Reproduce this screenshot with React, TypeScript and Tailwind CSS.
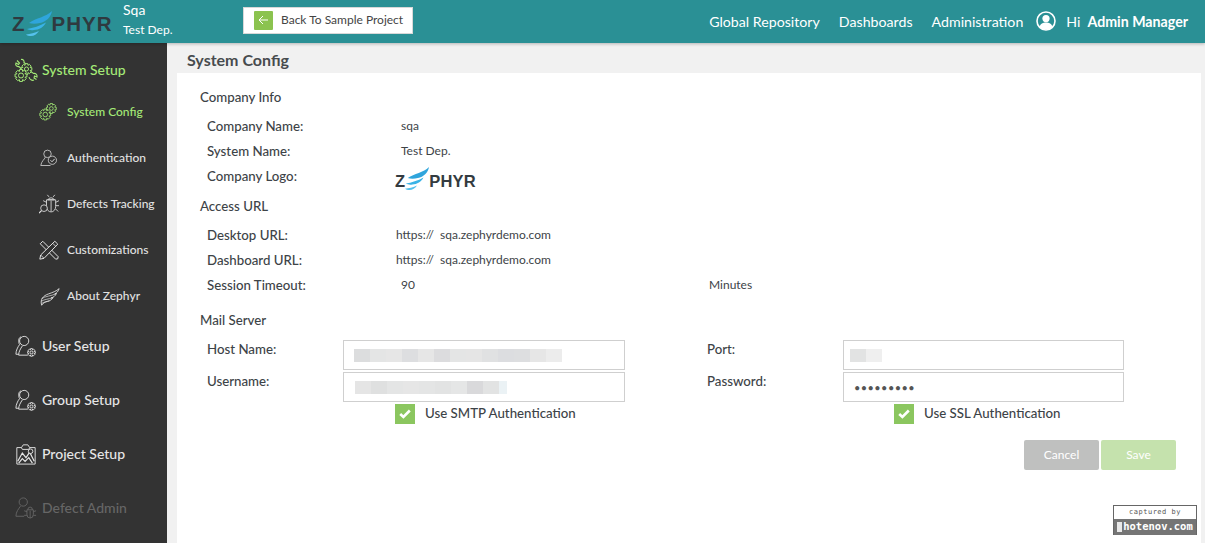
const gearPath = (cx: number, cy: number, r: number) => {
    // outline with 8 teeth
    let d = "";
    for (let i = 0; i < 8; i++) {
        const a = (i * Math.PI) / 4;
        const pts = [
            [a - 0.39, r * 0.86],
            [a - 0.24, r * 1.22],
            [a + 0.24, r * 1.22],
            [a + 0.39, r * 0.86],
        ];
        pts.forEach(([t, l], j) => {
            d += (i === 0 && j === 0 ? "M" : "L") + (cx + Math.cos(t) * l).toFixed(2) + " " + (cy + Math.sin(t) * l).toFixed(2);
        });
    }
    return d + "z";
};

const Gear = ({ cx, cy, r, hole = 0.45 }: { cx: number; cy: number; r: number; hole?: number }) => (
    <g>
        <path d={gearPath(cx, cy, r)} fill="#333333" />
        <circle cx={cx} cy={cy} r={r * hole} />
    </g>
);

const Icon = ({ children, size = 24, className = "" }: { children: React.ReactNode; size?: number; className?: string }) => (
    <svg width={size} height={size} viewBox="0 0 24 24" fill="none" stroke="currentColor" strokeWidth="1" className={"shrink-0 " + className}>
        {children}
    </svg>
);

const SetupIcon = () => (
    <Icon size={24}>
        <path d="M3 2.500l2.500 2.500-1 1.500L2 5c-1 2 .5 4 3 3.500L8 11.500M7 1.500c2-.5 3.500 1 3 3L13 7" strokeWidth="1.100" />
        <path d="M22.500 21.500l-2.500-1.500.5-2 2.500 1c.5-2.500-1.500-4-3.500-3.500L16 13M15 19c.5 2.500 3 4 5 3" strokeWidth="1.100" />
        <Gear cx={12.500} cy={11} r={4.500} />
        <Gear cx={7} cy={17.500} r={5} hole={0.5} />
    </Icon>
);

const ConfigIcon = () => (
    <Icon size={20}>
        <Gear cx={14.800} cy={7.800} r={5} />
        <Gear cx={7.500} cy={15} r={5.500} hole={0.5} />
    </Icon>
);

const AuthIcon = () => (
    <Icon size={18}>
        <circle cx="10" cy="6.500" r="5" />
        <path d="M7 11c-1 3-5 5-6 11h13" />
        <circle cx="16.500" cy="15" r="5.500" fill="#333333" />
        <path d="M14 15l2 2 3.500-3.800" strokeWidth="1.300" />
    </Icon>
);

const BugIcon = () => (
    <Icon size={20}>
        <path d="M10.500 7a4.500 4.500 0 0 1 8 0z" />
        <path d="M9 7h11v8a5.500 6.500 0 0 1-11 0z" />
        <path d="M14.500 8v13M12 3.500L10 1M17 3.500L19 1M9 10L5 8M20 10l4-2M20 14h4M20 18l3 3" />
        <circle cx="6" cy="17" r="4" fill="#333333" />
        <path d="M3 20l-3 3" strokeWidth="1.500" />
    </Icon>
);

const CrossIcon = () => (
    <Icon size={20}>
        <path d="M1.500 4.500l3-3L23 20l-.5 2.500-2.500.5z" strokeWidth="1.200" />
        <path d="M19 1.500l3.500 3.500L6 22l-5 1 1-5z" fill="#333333" strokeWidth="1.200" />
        <path d="M16.500 4l3.500 3.500M2 18l4 4" strokeWidth="1" />
    </Icon>
);

const WingIcon = () => (
    <Icon size={21}>
        <path d="M3 22C1 15 5 11 11 9c4-1.500 9-3 12-6-1 3-2.500 5-5 6 .5 0 1 0 2-.5-1.500 3-3.500 4.500-6 5l2-.2c-1.500 2.500-3.500 3.500-6 4.200-3 .8-5.500 2-7 4.500z" />
        <path d="M3 14.500c4-3 11-3 16-5.500M2.500 17.500c4-2.500 9-2.500 12.500-4M3 20c3-2 6-2.300 9-3" strokeWidth="0.800" />
    </Icon>
);

const UserGearIcon = () => (
    <Icon size={22}>
        <circle cx="10" cy="6.500" r="5" />
        <path d="M6.500 2C3.500 3 3.500 8 5 10.500 3 13 1 17 1 21h3M8 12c-2 3-4 6-4 10h10" />
        <Gear cx={18} cy={19} r={3.500} />
    </Icon>
);

const ProjectIcon = () => (
    <Icon size={22}>
        <path d="M7 5H2v18h20V5h-6" />
        <path d="M7 5l2-3h5l2 3-1 2H8z" />
        <path d="M3 20l5-9 4 5 4-6 5 10M4 22l4-5 3 3 4-4 4 6" strokeWidth="1.300" />
        <circle cx="17" cy="9" r="2.500" fill="#333333" />
    </Icon>
);

const UserBugIcon = () => (
    <Icon size={22}>
        <circle cx="9" cy="5.500" r="4.500" />
        <path d="M6 10c-2 3-5 6-5 11h9" />
        <path d="M13 14h7v5a3.500 4 0 0 1-7 0zM14 14a2.500 3 0 0 1 5 0M16.500 15v8M13 16l-3-1M20 16l3-1M13 20h-3M20 20h3" />
    </Icon>
);

const MainItem = ({ icon, label, className = "text-[#e6e6e6]", first = false }: { icon: React.ReactNode; label: string; className?: string; first?: boolean }) => (
    <div className={"flex items-center pl-[14px] gap-[4px] text-[14px] font-medium " + className + (first ? " h-[46px] pt-2" : " h-[54px]")}>
        <span className="w-[24px] flex justify-center">{icon}</span>
        <span className="-mt-[2px]">{label}</span>
    </div>
);

const SubItem = ({ icon, label, className = "text-[#e2e2e2]" }: { icon: React.ReactNode; label: string; className?: string }) => (
    <div className={"flex items-center h-[46px] pl-[39px] gap-[8px] text-[12px] font-medium " + className}>
        <span className="w-[20px] flex justify-center">{icon}</span>
        <span>{label}</span>
    </div>
);

const Section = ({ children }: { children: React.ReactNode }) => (
    <div className="text-[13.25px] font-medium text-[#3d4347] leading-[20px] pl-[23px]">{children}</div>
);

const InfoRow = ({ label, children, valueClass = "pl-[5px]" }: { label: string; children?: React.ReactNode; valueClass?: string }) => (
    <div className="flex items-center h-[25px] pl-[30px] text-[#3d4347]">
        <span className="w-[189px] shrink-0 text-[13.25px] font-medium">{label}</span>
        <span className={"text-[12px] -mt-[2px] " + valueClass}>{children}</span>
    </div>
);

const Blur = ({ parts, tail }: { parts: string[]; tail?: string }) => (
    <div className="flex h-[13px]">
        {parts.map((c, i) => (
            <div key={i} className="w-[16px] h-full" style={{ background: c }} />
        ))}
        {tail && <div className="w-[8px] h-full" style={{ background: tail }} />}
    </div>
);

const Field = ({ children, className = "pl-[10px]" }: { children: React.ReactNode; className?: string }) => (
    <div className={"h-[30px] border border-[#cfcfcf] bg-white flex items-center overflow-hidden " + className}>{children}</div>
);

const Check = () => (
    <span className="w-[20px] h-[20px] bg-[#8bc65f] flex items-center justify-center shrink-0">
        <svg width="12" height="10" viewBox="0 0 12 10" fill="none" stroke="white" strokeWidth="2.600">
            <path d="M1.200 5l3.200 3L10.800 1.500" />
        </svg>
    </span>
);

const Wordmark = ({ z, wing }: { z: string; wing: string }) => (
    <div className={"flex items-end font-[family-name:'Liberation_Sans',sans-serif] font-bold leading-none " + z}>
        <span>Z</span>
        <svg viewBox="0 0 26 26" className={wing}>
            <path d="M3 12C10 7 20 6 26 0c-1 6-6 11-12 12-4 1-8 1-11 0z" fill="#2fa5dc" />
            <path d="M1 18c6-1 13-3 19-6.500-2 4.500-7 7.500-12 7.500-3 .5-5 0-7-1z" fill="#39b3e6" />
            <path d="M0 23.500c4-.5 9-1.500 13-3.500-2 3-5 5-8 5-2 0-4-.5-5-1.500z" fill="#55c1ec" />
        </svg>
        <span>PHYR</span>
    </div>
);

export default function App() {
    return (
        <div className="h-[543px] w-[1205px] overflow-hidden flex flex-col font-[family-name:Lato,sans-serif] relative bg-[#f1f1f1]">
            {/* top bar */}
            <header className="h-[43px] shrink-0 bg-[#2a9095] flex items-center shadow-[0_1px_3px_rgba(0,0,0,0.25)] relative z-10">
                <div className="w-[123px] pl-[12px] shrink-0 text-[#2f3a40] mt-[4px]">
                    <Wordmark z="text-[20.5px] tracking-[1px] [&>span]:mb-[2px]" wing="w-[26px] h-[26px]" />
                </div>
                <div className="w-[120px] shrink-0 text-white">
                    <div className="text-[14px] leading-[20px] -mt-[4px]">Sqa</div>
                    <div className="text-[12px] leading-[20px]">Test Dep.</div>
                </div>
                <div className="w-[170px] h-[27px] -mt-[3px] bg-white border border-[#d8d8d8] flex items-center pl-[10px] gap-[8px] text-[12px] text-[#444444] shrink-0">
                    <span className="w-[19px] h-[19px] bg-[#8bc34f] rounded-[1px] flex items-center justify-center">
                        <svg width="11" height="10" viewBox="0 0 11 10" fill="none" stroke="white" strokeWidth="1">
                            <path d="M10 5H1M5 1L1 5l4 4" />
                        </svg>
                    </span>
                    <span>Back To Sample Project</span>
                </div>
                <nav className="ml-auto flex items-center pr-[17px] text-white text-[14.2px]">
                    <span>Global Repository</span>
                    <span className="ml-[19px]">Dashboards</span>
                    <span className="ml-[19px]">Administration</span>
                    <svg width="20" height="20" viewBox="0 0 20 20" className="ml-[13px]">
                        <circle cx="10" cy="10" r="9" fill="none" stroke="white" strokeWidth="1.600" />
                        <circle cx="10" cy="7.600" r="3.600" fill="white" />
                        <path d="M3.500 16c1-3.500 3.500-4.500 6.500-4.500s5.500 1 6.500 4.500a9 9 0 0 1-13 0z" fill="white" />
                    </svg>
                    <span className="ml-[10px]">Hi</span>
                    <span className="ml-[7px] font-bold">Admin Manager</span>
                </nav>
            </header>

            <div className="flex-1 flex min-h-0">
                <aside className="w-[167px] shrink-0 bg-[#333333]">
                    <MainItem first icon={<SetupIcon />} label="System Setup" className="text-[#a4ea77]" />
                    <div>
                        <SubItem icon={<ConfigIcon />} label="System Config" className="text-[#a4ea77]" />
                        <SubItem icon={<AuthIcon />} label="Authentication" />
                        <SubItem icon={<BugIcon />} label="Defects Tracking" />
                        <SubItem icon={<CrossIcon />} label="Customizations" />
                        <SubItem icon={<WingIcon />} label="About Zephyr" />
                    </div>
                    <MainItem icon={<UserGearIcon />} label="User Setup" />
                    <MainItem icon={<UserGearIcon />} label="Group Setup" />
                    <MainItem icon={<ProjectIcon />} label="Project Setup" />
                    <MainItem icon={<UserBugIcon />} label="Defect Admin" className="text-[#666666]" />
                </aside>

                <main className="flex-1 flex flex-col pl-[10px] pr-[4px] min-w-0">
                    <div className="h-[30px] shrink-0 flex items-center pl-[10px] pt-[3px] text-[16px] font-bold text-[#474b4e]">System Config</div>
                    <section className="flex-1 bg-white pt-[14px]">
                        <Section>Company Info</Section>
                        <div className="mt-[7px]">
                            <InfoRow label="Company Name:">sqa</InfoRow>
                            <InfoRow label="System Name:">Test Dep.</InfoRow>
                            <div className="flex items-center h-[25px] pl-[30px] text-[#3d4347]">
                                <span className="w-[188px] shrink-0 text-[13.25px] font-medium">Company Logo:</span>
                                <div className="text-[#333b40] pt-[4px]">
                                    <Wordmark z="text-[16.5px] tracking-[0.2px] [&>span]:mb-[1px]" wing="w-[24px] h-[24px]" />
                                </div>
                            </div>
                        </div>
                        <div className="mt-[7px]"><Section>Access URL</Section></div>
                        <div className="mt-[7px]">
                            <InfoRow label="Desktop URL:" valueClass="whitespace-nowrap">https://&nbsp;&nbsp;sqa.zephyrdemo.com</InfoRow>
                            <InfoRow label="Dashboard URL:" valueClass="whitespace-nowrap">https://&nbsp;&nbsp;sqa.zephyrdemo.com</InfoRow>
                            <div className="flex items-center h-[25px] pl-[30px] text-[#3d4347]">
                                <span className="w-[189px] shrink-0 text-[13.25px] font-medium">Session Timeout:</span>
                                <span className="text-[12px] pl-[5px] w-[313px] -mt-[2px]">90</span>
                                <span className="text-[12px] -mt-[2px]">Minutes</span>
                            </div>
                        </div>
                        <div className="mt-[12px]"><Section>Mail Server</Section></div>

                        <div className="flex mt-[10px]">
                            <div className="w-[166px] shrink-0 pl-[30px] text-[13.25px] font-medium text-[#3d4347]">
                                <div className="h-[32px]">Host Name:</div>
                                <div className="h-[32px]">Username:</div>
                            </div>
                            <div className="w-[282px] shrink-0">
                                <div className="flex flex-col gap-[2px]">
                                    <Field>
                                        <Blur parts={["#dcddde", "#e4e5e5", "#e6e6e6", "#dddee0", "#e6e6e6", "#dcdcde", "#e4e5e5", "#e5e5e5", "#e0e1e2", "#dcdde0", "#dddee0", "#e6e6e6", "#ececec"]} />
                                    </Field>
                                    <Field className="pl-[11px]">
                                        <Blur parts={["#e5e5e5", "#dfe0e0", "#e4e5e5", "#e6e6e6", "#e4e5e5", "#e2e3e3", "#e5e6e6", "#d9d9db", "#e2e3e3"]} tail="#ebf2f5" />
                                    </Field>
                                </div>
                                <div className="flex items-center gap-[10px] h-[20px] mt-[2px] ml-[52px] text-[13.25px] font-medium text-[#3d4347]">
                                    <Check />
                                    <span>Use SMTP Authentication</span>
                                </div>
                            </div>
                            <div className="w-[82px] shrink-0"></div>
                            <div className="w-[136px] shrink-0 text-[13.25px] font-medium text-[#3d4347]">
                                <div className="h-[32px]">Port:</div>
                                <div className="h-[32px]">Password:</div>
                            </div>
                            <div className="w-[281px] shrink-0">
                                <div className="flex flex-col gap-[2px]">
                                    <Field className="pl-[6px]">
                                        <Blur parts={["#e2e3e3", "#efefef"]} />
                                    </Field>
                                    <Field>
                                        <span className="text-[#555555] text-[11px] tracking-[0.4px] leading-none">•••••••••</span>
                                    </Field>
                                </div>
                                <div className="flex items-center gap-[10px] h-[20px] mt-[2px] ml-[51px] text-[13.25px] font-medium text-[#3d4347]">
                                    <Check />
                                    <span>Use SSL Authentication</span>
                                </div>
                            </div>
                        </div>

                        <div className="flex justify-end gap-[2px] mt-[16px] pr-[25px]">
                            <button className="w-[75px] h-[30px] bg-[#bfc0bf] rounded-[2px] text-white text-[12px]">Cancel</button>
                            <button className="w-[75px] h-[30px] bg-[#c5e2ad] rounded-[2px] text-white text-[12px]">Save</button>
                        </div>
                    </section>
                </main>
            </div>

            {/* watermark */}
            <div className="absolute left-[1113px] top-[505px] w-[84px] h-[30px] border border-[#666666] flex flex-col font-[family-name:'DejaVu_Sans_Mono',monospace]">
                <div className="h-[13px] bg-white text-[7px] leading-[13px] text-center tracking-[0.5px] text-[#555555]">captured by</div>
                <div className="flex-1 bg-[#757575] text-white text-[10.5px] flex items-center justify-center gap-[1px] font-bold">
                    <span className="w-[5px] h-[10px] bg-[#e8e8e8]"></span>
                    <span>hotenov.com</span>
                </div>
            </div>
        </div>
    );
}
